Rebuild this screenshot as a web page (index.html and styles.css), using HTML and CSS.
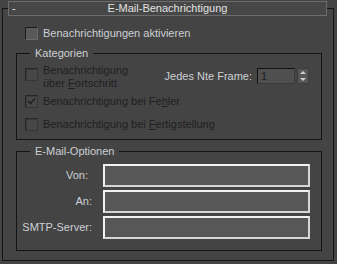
FILE: index.html
```html
<!DOCTYPE html>
<html lang="de">
<head>
    <meta charset="UTF-8">
    <title>E-Mail-Benachrichtigung</title>
    <link rel="stylesheet" href="styles.css">
</head>
<body>
    <div class="rollout">
        <div class="rollout-title">
            <span class="rollout-toggle">-</span>
            <span class="rollout-name">E-Mail-Benachrichtigung</span>
        </div>

        <div class="check-row main-check">
            <span class="checkbox"></span>
            <span class="check-label">Benachrichtigungen aktivieren</span>
        </div>

        <div class="group group-categories">
            <div class="group-title">Kategorien</div>

            <div class="cat-row first">
                <div class="check-row multi disabled">
                    <span class="checkbox"></span>
                    <span class="check-label">Benachrichtigung<br>über <u>F</u>ortschritt</span>
                </div>
                <div class="frame-field">
                    <span class="frame-label">Jedes Nte Frame:</span>
                    <span class="spin-input">1</span>
                    <span class="spin-buttons">
                        <span class="spin-up"></span>
                        <span class="spin-down"></span>
                    </span>
                </div>
            </div>

            <div class="check-row disabled second">
                <span class="checkbox checked">
                    <svg width="9" height="9" viewBox="0 0 9 9"><path d="M1 4 L3.5 6.5 L8 1.5" fill="none" stroke="#222222" stroke-width="1.6"/></svg>
                </span>
                <span class="check-label">Benachrichtigung bei Fe<u>h</u>ler</span>
            </div>

            <div class="check-row disabled third">
                <span class="checkbox"></span>
                <span class="check-label">Benachrichtigung bei <u>F</u>ertigstellung</span>
            </div>
        </div>

        <div class="group group-email">
            <div class="group-title">E-Mail-Optionen</div>
            <div class="field-row">
                <span class="field-label von">Von:</span>
                <span class="text-input"></span>
            </div>
            <div class="field-row">
                <span class="field-label">An:</span>
                <span class="text-input"></span>
            </div>
            <div class="field-row">
                <span class="field-label">SMTP-Server:</span>
                <span class="text-input"></span>
            </div>
        </div>
    </div>
</body>
</html>
```

FILE: styles.css
```css
body {
    margin: 0;
    background: #444444;
    font-family: 'Liberation Sans', Arial, sans-serif;
    font-size: 11px;
    line-height: 13px;
    color: #ccd0d4;
}

.rollout {
    box-sizing: border-box;
    width: 332px;
    height: 253px;
    margin: 8px 0 0 2px;
    border: 1px solid #141414;
}

.rollout-title {
    box-sizing: border-box;
    height: 15px;
    margin: -8px 6px 0 5px;
    border: 1px solid #6c6c6c;
    background: #474747;
    display: flex;
    align-items: center;
    color: #e2e2e2;
}

.rollout-toggle {
    width: 10px;
    padding-left: 3px;
}

.rollout-name {
    flex: 1;
    text-align: center;
    padding-right: 13px;
}

.check-row {
    display: flex;
    align-items: center;
    height: 13px;
}

.main-check {
    margin: 11px 0 0 22px;
}

.checkbox {
    box-sizing: border-box;
    width: 13px;
    height: 13px;
    flex: none;
    border: 1px solid;
    border-color: #1c1c1c #6a6a6a #6a6a6a #1c1c1c;
    background: #595959;
    margin-right: 5px;
    display: flex;
    align-items: center;
    justify-content: center;
}

.disabled .checkbox {
    border-color: #262626 #363636 #363636 #262626;
    background: #474747;
    box-shadow: inset 1px 1px 0 #3a3a3a;
}

.disabled .check-label {
    color: #1f1f1f;
}

.check-label u {
    text-decoration-thickness: 1px;
    text-underline-offset: 1px;
}

.group {
    box-sizing: border-box;
    margin: 0 11px 0 13px;
    border: 1px solid #141414;
    padding: 0 12px 0 8px;
}

.group-title {
    width: max-content;
    height: 13px;
    margin: -7px 0 0 5px;
    padding: 0 5px;
    background: #444444;
}

.group-categories {
    height: 87px;
    margin-top: 13px;
}

.cat-row {
    display: flex;
    justify-content: space-between;
    margin-top: 4px;
}

.check-row.multi {
    height: 26px;
    align-items: flex-start;
}

.check-row.multi .checkbox {
    margin-top: 4px;
}

.check-row.second {
    margin-top: 5px;
}

.check-row.third {
    margin-top: 10px;
}

.frame-field {
    display: flex;
    align-items: center;
    height: 16px;
    margin-top: 4px;
}

.frame-label {
    margin-right: 5px;
}

.spin-input {
    box-sizing: border-box;
    width: 38px;
    height: 16px;
    border: 1px solid #111111;
    border-right-color: #3a3a3a;
    border-bottom-color: #3a3a3a;
    background: #4f4f4f;
    color: #222222;
    padding-left: 3px;
    line-height: 14px;
}

.spin-buttons {
    box-sizing: border-box;
    width: 12px;
    height: 16px;
    margin-left: 2px;
    background: #565656;
    border: 1px solid #3c3c3c;
    display: flex;
    flex-direction: column;
    align-items: center;
    justify-content: space-around;
}

.spin-up,
.spin-down {
    width: 0;
    height: 0;
    border-left: 3px solid transparent;
    border-right: 3px solid transparent;
}

.spin-up {
    border-bottom: 3px solid #cfcfcf;
}

.spin-down {
    border-top: 3px solid #cfcfcf;
}

.group-email {
    height: 100px;
    margin-top: 11px;
    padding: 0 11px 0 8px;
}

.field-row {
    display: flex;
    align-items: center;
    margin-top: 3px;
}

.group-title + .field-row {
    margin-top: 6px;
}

.field-label {
    box-sizing: border-box;
    width: 67px;
    flex: none;
    display: flex;
    justify-content: flex-end;
    white-space: nowrap;
    margin-right: 11px;
}

.field-label.von {
    padding-right: 4px;
}

.text-input {
    box-sizing: border-box;
    width: 207px;
    height: 23px;
    border: 2px solid #f2f2f2;
    border-right-color: #d6d6d6;
    border-bottom-color: #d6d6d6;
    background: #575757;
}
```
